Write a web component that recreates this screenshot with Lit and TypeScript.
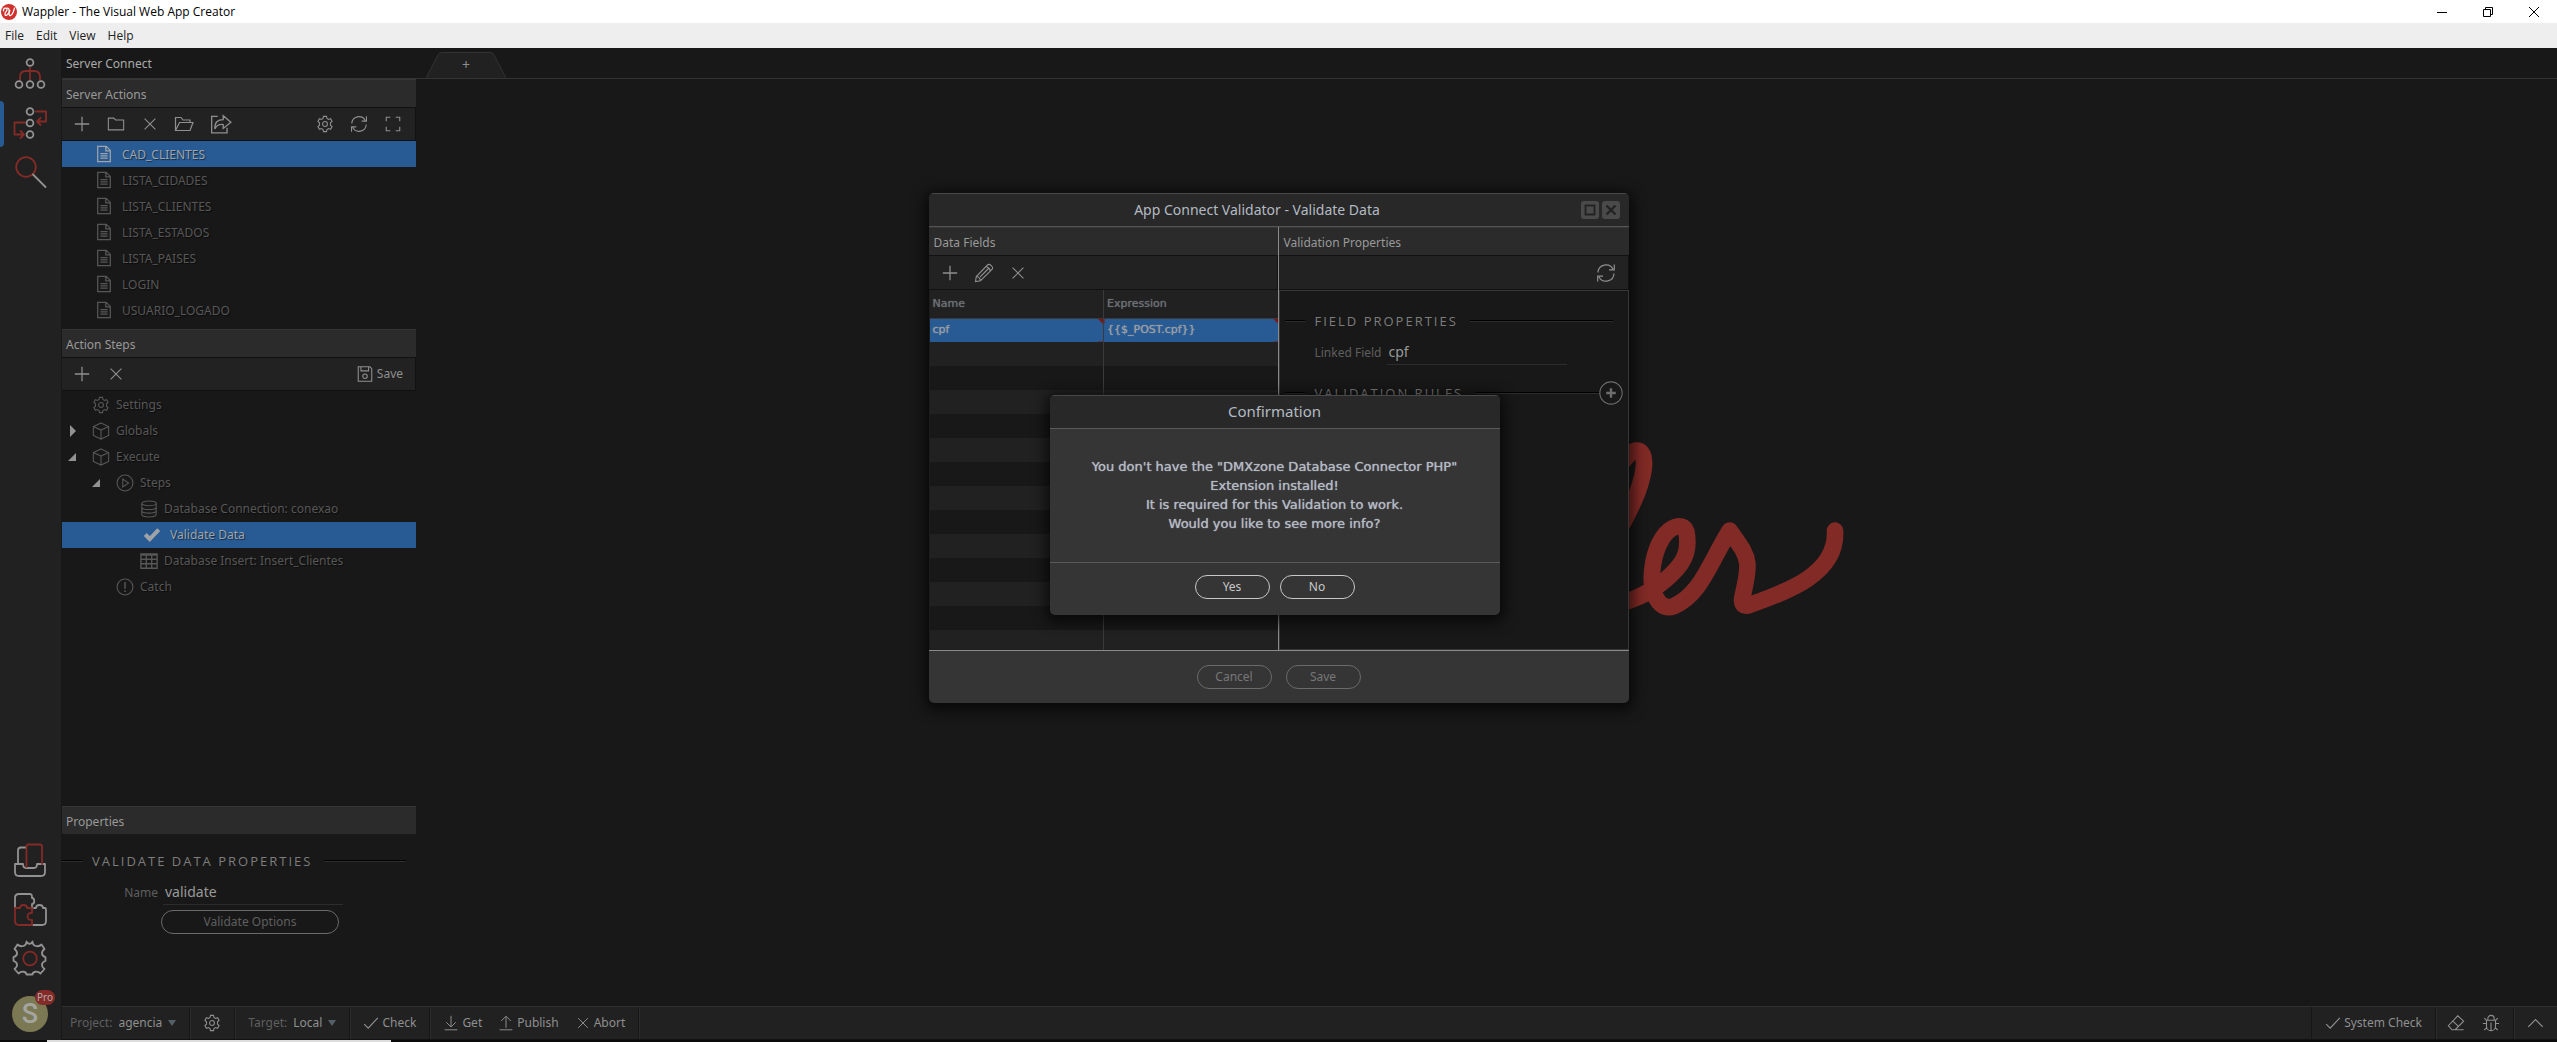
import { LitElement, html, svg, css, nothing } from "lit";
import { customElement, property } from "lit/decorators.js";
import { classMap } from "lit/directives/class-map.js";

const glyphs: Record<string, unknown> = {
  plus: svg`<path d="M10 2v16M2 10h16" stroke-width="1.4"/>`,
  folder: svg`<path d="M1.500 16.500v-13h6l2 2h9v11z"/>`,
  cross: svg`<path d="M4 4l12 12M16 4L4 16" stroke-width="1.2"/>`,
  open: svg`<path d="M1.500 16V3.500h5.500l2 2.500h7v2.500M1.500 16.500l4-8h13.500l-3 8z"/>`,
  share: svg`<path d="M7 3H1.500v15h14v-4.500M4.500 14.500C4 8.500 7 6 12 6V2.500L19 8.500 12 14V10.500C8 10 6 11 4.500 14.500z"/>`,
  gear: svg`<path d="M8.300 1.500h3.400l.500 2.400 1.700 1 2.300-.8 1.700 3-1.800 1.600v2.600l1.800 1.600-1.700 3-2.300-.8-1.700 1-.500 2.400H8.300l-.500-2.400-1.700-1-2.300.8-1.700-3 1.800-1.600V8.700L2.100 7.100l1.700-3 2.300.8 1.700-1z"/><circle cx="10" cy="10" r="2.700"/>`,
  refresh: svg`<path d="M2 9.500A8 8 0 0 1 17 6M18 10.500A8 8 0 0 1 3 14M18.300 1.500v5.300h-5.300M1.700 18.500v-5.300H7"/>`,
  full: svg`<path d="M2.500 7V2.500H7M13 2.500h4.500V7M17.500 13v4.500H13M7 17.500H2.500V13"/>`,
  file: svg`<path d="M3 1.500h9.500l4.500 4.500v12.500H3zM12 1.500V6.500h5M6 9.500h8M6 12h8M6 14.500h8" stroke-width="1.400"/>`,
  save: svg`<path d="M2.500 2h13l2 2v14h-15zM5.500 2v4.500h8.500V2"/><circle cx="10" cy="12.500" r="2.500"/>`,
  cube: svg`<path d="M10 1l8.500 4v10L10 19l-8.500-4V5zM1.500 5L10 9l8.500-4M10 9v10"/>`,
  play: svg`<circle cx="10" cy="10" r="8.800"/><path d="M7.500 5.500v9l6.500-4.500z"/>`,
  db: svg`<ellipse cx="10" cy="3.800" rx="8" ry="2.600"/><path d="M2 3.800v12.400c0 3.500 16 3.500 16 0V3.800M2 8c0 3.500 16 3.500 16 0M2 12c0 3.500 16 3.500 16 0"/>`,
  tick: svg`<path d="M2.500 9.500l5 5L17.500 4" stroke-width="4.500"/>`,
  table: svg`<path d="M1 2h18v16H1zM1 3.500h18M1 8h18M1 13h18M7 3v15M13 3v15" stroke-width="1.500"/>`,
  alert: svg`<circle cx="10" cy="10" r="8.800"/><path d="M10 4.500v7.500M10 13.500v2" stroke-width="1.600"/>`,
  check: svg`<path d="M1.500 11.500l5 5L18.500 3.500" stroke-width="1.500"/>`,
  down: svg`<path d="M10 1v13.500M4 9l6 6 6-6M2 18.500h16"/>`,
  up: svg`<path d="M10 16V2M4 7.500l6-6 6 6M2 18.500h16"/>`,
  eraser: svg`<path d="M9 17.500H5.500L1.500 13 12 2l6.500 6L9 17.500h9.500M6.500 8l6.500 6"/>`,
  bug: svg`<path d="M5 7h10v6.500a5 5 0 0 1-10 0zM6.500 7V5a3.500 3.500 0 0 1 7 0v2M10 9.500V18M1 10.500h4M15 10.500h4M2.500 4.500L5 7M17.500 4.500L15 7M2.500 18L5.500 15M17.500 18l-3-3"/>`,
  caret: svg`<path d="M1.500 14L10 5.500l8.500 8.500" stroke-width="1.400"/>`,
  pencil: svg`<path d="M1.500 18.500l.800-5L13.500 2c2-2 6.500 2 4.500 4.500L6.500 17.700zM2.300 13.500c2 0 4 2 4.200 4.200M12 3.500c2 .500 4 2.500 4.500 4.500M6 14L14.500 5.500" stroke-width="1.100"/>`,
  max: svg`<path d="M5 5h10v10H5z" stroke-width="2"/>`,
  shut: svg`<path d="M5 5l10 10M15 5L5 15" stroke-width="2.600"/>`,
  round: svg`<circle cx="10" cy="10" r="9.300" stroke-width=".900"/><path d="M10 6v8M6 10h8" stroke-width="2"/>`,
};

const icon = (name: string, size = 18) =>
  html`<svg class="icon" width=${size} height=${size} viewBox="0 0 20 20" aria-hidden="true">${glyphs[name]}</svg>`;

const rail = {
  routes: svg`<g class="r"><path d="M18 12v12M8 24v-3c0-4 2-6 6-6h8c4 0 6 2 6 6v3"/></g><g class="w"><circle cx="18" cy="6.500" r="3.400"/><circle cx="7" cy="28.500" r="3.400"/><circle cx="18" cy="28.500" r="3.400"/><circle cx="29" cy="28.500" r="3.400"/></g>`,
  api: svg`<g class="r"><path d="M24 6.500h10v10H25M28.500 13L25 16.500l3.500 3.500M13 17.500H2.500v12H12M8.500 26l3.500 3.500L8.500 33"/></g><g class="w"><circle cx="18" cy="6.500" r="3.400"/><circle cx="18" cy="18" r="3.400"/><circle cx="18" cy="29.500" r="3.400"/></g>`,
  search: svg`<g class="r"><circle cx="14" cy="13" r="9.800"/></g><g class="w"><path d="M21 20.500L33.500 33"/></g>`,
  tray: svg`<g class="w"><path d="M14 5.500H9c-2 0-3 1-3 3V22M3 22h8c0 3 1 4 3 4h8c2 0 3-1 3-4h8v8c0 3-1 4-4 4H7c-3 0-4-1-4-4z"/></g><g class="r"><path d="M14.500 25V4.500c0-1.500.500-2 2-2H28c1.500 0 2 .5 2 2V22"/></g>`,
  puzzle: svg`<g class="w"><path d="M3 17V7c0-3 1-4 4-4h10c3 0 3 1 3 4 3 0 3 6 0 6v5M22 17h2c0-4 7-4 7 0h2c1 0 1 1 1 2v11c0 3-1 4-4 4H21"/></g><g class="r"><path d="M20 34H7c-3 0-4-1-4-4V17h5c0-4 7-4 7 0h5v5c-6-1-6 8 0 7z"/></g>`,
  gear: svg`<g class="w"><path d="M14.500 1.500c0 5-6 6-9 3L2.500 9c4 3 3 7-1 8v4c4 1 5 5 1 8l4 4.500c3-3 8-2 8 1h6c0-3 5-4 8-1l4-4.500c-4-3-3-7 1-8v-4c-4-1-5-5-1-8l-3-4.500c-3 3-9 2-9-3-1 3-5 3-6 0z"/></g><g class="r"><circle cx="18" cy="18.500" r="6.800"/></g>`,
};

const text = css`
  :host {
    font-family: "Noto Sans", "Open Sans", "Liberation Sans", sans-serif;
    font-size: 12px;
    line-height: 16px;
    color: #8f8f8f;
  }
  * { box-sizing: border-box; }
  button, input, select { font: inherit; color: inherit; background: none; border: 0; margin: 0; padding: 0; border-radius: 0; outline: 0; }
  .icon { display: block; flex: none; fill: none; stroke: currentColor; stroke-width: 1.2; }
  .head { display: flex; flex: none; align-items: center; height: 28px; padding: 2px 4px 0; background: #2b2b2b; border-top: 1px solid #363636; color: #999; margin: 0; font-size: 12px; font-weight: 400; }
  .bar { display: flex; flex: none; align-items: center; height: 34px; padding: 0 5px 0 3px; background: #222; border: 1px solid #111; border-left: 0; color: #8f8f8f; }
  .bar button { display: flex; align-items: center; justify-content: center; gap: 3px; width: 34px; height: 30px; }
  .bar .save { width: auto; padding: 0 7px 0 9px; }
  .push { flex: 1; }
  .legend { display: flex; align-items: center; margin: 0; color: #7d7d7d; font: 400 13px/20px "Open Sans", "Noto Sans", sans-serif; letter-spacing: 2px; }
  .legend .rule { height: 2px; border-top: 1px solid #000; border-bottom: 1px solid #2d2d2d; }
  .legend .rule:first-child { width: 20px; margin-right: 10px; }
  .legend .rule:last-of-type { flex: 1; margin-left: 12px; }
  .field { display: flex; align-items: center; color: #5f5f5f; }
  .field label { text-align: right; padding-right: 5px; }
  .field input { width: 180px; height: 24px; padding: 0 2px 2px; border-bottom: 1px solid #2c2c2c; color: #9a9a9a; font-size: 14px; }
  .pill { height: 24px; border: 1px solid #6a6a6a; border-radius: 12px; }
`;

type Node = { depth: number; icon: string; label: string; fold?: "open" | "closed"; on?: boolean };

const actions = ["CAD_CLIENTES", "LISTA_CIDADES", "LISTA_CLIENTES", "LISTA_ESTADOS", "LISTA_PAISES", "LOGIN", "USUARIO_LOGADO"];
const steps: Node[] = [
  { depth: 0, icon: "gear", label: "Settings" },
  { depth: 0, icon: "cube", label: "Globals", fold: "closed" },
  { depth: 0, icon: "cube", label: "Execute", fold: "open" },
  { depth: 1, icon: "play", label: "Steps", fold: "open" },
  { depth: 2, icon: "db", label: "Database Connection: conexao" },
  { depth: 2, icon: "tick", label: "Validate Data", on: true },
  { depth: 2, icon: "table", label: "Database Insert: Insert_Clientes" },
  { depth: 1, icon: "alert", label: "Catch" },
];

@customElement("side-rail")
export class SideRail extends LitElement {
  static styles = [text, css`
    :host { display: flex; flex-direction: column; align-items: stretch; background: #212121; padding-top: 1px; }
    button { position: relative; display: flex; justify-content: center; align-items: center; height: 49px; padding-right: 1px; }
    .active::before { content: ""; position: absolute; left: 0; top: 3px; bottom: 0; width: 4px; background: #285b94; border-radius: 0 4px 4px 0; }
    .pic { fill: none; stroke-width: 1.8; stroke-linecap: round; stroke-linejoin: round; }
    .r { stroke: #842a27; }
    .w { stroke: #929292; }
    .account { height: 58px; padding-top: 5px; }
    .face { width: 36px; height: 36px; border-radius: 50%; background: #7b7854; color: #a5a5a0; font: 500 27px/37px Roboto, sans-serif; text-align: center; }
    .pro { position: absolute; right: 6px; top: 8px; padding: 0 2px; border-radius: 8px; background: #842a27; color: #b5aaaa; font-size: 10px; line-height: 15px; }
  `];
  private item(key: keyof typeof rail, label: string, on = false) {
    return html`<button class=${classMap({ active: on })} aria-label=${label}><svg class="pic" width="36" height="36" viewBox="0 0 36 36">${rail[key]}</svg></button>`;
  }
  render() {
    return html`
      ${this.item("routes", "Routes")}${this.item("api", "Server Connect", true)}${this.item("search", "Search")}
      <div class="push"></div>
      ${this.item("tray", "Resources")}${this.item("puzzle", "Extensions")}${this.item("gear", "Options")}
      <button class="account" aria-label="Account"><span class="face">S</span><span class="pro">Pro</span></button>`;
  }
}

@customElement("tool-panels")
export class ToolPanels extends LitElement {
  static styles = [text, css`
    :host { display: flex; flex-direction: column; min-height: 0; }
    ul { list-style: none; margin: 0; padding: 0; color: #575757; text-shadow: 1px 1px 1px #0008; }
    li { display: flex; align-items: center; height: 26px; }
    .files { padding-bottom: 6px; }
    .files li { padding-left: 33px; gap: 9px; }
    .files span { padding-top: 1px; }
    .tree { padding-top: 1px; }
    .on { background: #285b94; color: #9fa3a8; }
    .grow { flex: 1; }
    .fold, .slot { width: 24px; flex: none; }
    .slot.wide { width: 30px; padding-left: 3px; }
    .fold svg { display: block; fill: #929292; }
    .d0 { padding-left: 6px; }
    .d1 { padding-left: 30px; }
    .d2 { padding-left: 54px; }
    .props { min-height: 200px; }
    .props .legend { padding: 17px 10px 0 0; }
    .props .field { margin: 10px 0 5px; }
    .props label { width: 101px; }
    .wide-pill { width: 178px; margin-left: 99px; color: #5f5f5f; }
  `];
  private arrow(kind?: string) {
    if (!kind) return nothing;
    return html`<svg width="12" height="12" viewBox="0 0 12 12">${kind === "open" ? svg`<path d="M0 10L8 2v8z"/>` : svg`<path d="M2 0l6 6-6 6z"/>`}</svg>`;
  }
  render() {
    return html`
      <section>
        <h2 class="head">Server Actions</h2>
        <div class="bar">
          <button aria-label="New">${icon("plus")}</button><button aria-label="New folder">${icon("folder")}</button>
          <button aria-label="Delete">${icon("cross")}</button><button aria-label="Open">${icon("open", 20)}</button>
          <button class="save" aria-label="Share">${icon("share", 22)}</button><span class="push"></span>
          <button aria-label="Settings">${icon("gear")}</button><button aria-label="Refresh">${icon("refresh")}</button>
          <button aria-label="Full screen">${icon("full")}</button>
        </div>
        <ul class="files">${actions.map((a, i) => html`<li class=${classMap({ on: i === 0 })}>${icon("file")}<span>${a}</span></li>`)}</ul>
      </section>
      <section class="grow">
        <h2 class="head">Action Steps</h2>
        <div class="bar">
          <button aria-label="Add step">${icon("plus")}</button><button aria-label="Remove step">${icon("cross")}</button>
          <span class="push"></span><button class="save">${icon("save")}Save</button>
        </div>
        <ul class="tree">${steps.map((n) => html`<li class=${classMap({ on: !!n.on, ["d" + n.depth]: true })}>
          <span class="fold">${this.arrow(n.fold)}</span><span class=${classMap({ slot: true, wide: !!n.on })}>${icon(n.icon)}</span><span>${n.label}</span></li>`)}</ul>
      </section>
      <section class="props">
        <h2 class="head">Properties</h2>
        <h3 class="legend"><span class="rule"></span>VALIDATE DATA PROPERTIES<span class="rule"></span></h3>
        <div class="field"><label for="step-name">Name</label><input id="step-name" value="validate" /></div>
        <button class="pill wide-pill">Validate Options</button>
      </section>`;
  }
}

@customElement("status-bar")
export class StatusBar extends LitElement {
  static styles = [text, css`
    :host { display: flex; height: 34px; background: #212121; border-top: 1px solid #2f2f2f; border-bottom: 1px solid #111; }
    .cell { display: flex; align-items: center; border-right: 1px solid #161616; box-shadow: 1px 0 #2c2c2c; }
    .cell button { display: flex; align-items: center; gap: 3px; height: 100%; }
    .pick { padding: 0 13px; gap: 6px; color: #5f5f5f; }
    .pick:first-child { padding-left: 8px; }
    .pick select { appearance: none; color: #8f8f8f; field-sizing: content; }
    .pick svg { fill: #55606a; }
    .solo { padding: 0 13px; }
    .trio { gap: 16px; padding: 0 13px; }
    .end { border-left: 1px solid #161616; }
    .icons { gap: 17px; padding: 0 13px 0 11px; }
    .last { border-right: 0; padding: 0 13px; }
  `];
  private pick(id: string, label: string, value: string) {
    return html`<div class="cell pick"><label for=${id}>${label}</label><select id=${id}><option>${value}</option></select><svg width="8" height="6" viewBox="0 0 8 6"><path d="M0 0h8L4 6z"/></svg></div>`;
  }
  render() {
    return html`
      ${this.pick("project", "Project:", "agencia")}
      <div class="cell solo"><button aria-label="Project settings">${icon("gear")}</button></div>
      ${this.pick("target", "Target:", "Local")}
      <div class="cell solo"><button>${icon("check", 16)}Check</button></div>
      <div class="cell trio"><button>${icon("down", 16)}Get</button><button>${icon("up", 16)}Publish</button><button>${icon("cross", 16)}Abort</button></div>
      <span class="push"></span>
      <div class="cell end solo"><button>${icon("check", 16)}System Check</button></div>
      <div class="cell icons"><button aria-label="Clear">${icon("eraser")}</button><button aria-label="Debug">${icon("bug")}</button></div>
      <div class="cell last"><button aria-label="Expand">${icon("caret", 17)}</button></div>`;
  }
}

@customElement("validator-dialog")
export class ValidatorDialog extends LitElement {
  static styles = [text, css`
    :host { display: flex; flex-direction: column; border-radius: 5px; overflow: hidden; background: #353535; box-shadow: 0 3px 14px 4px #000a; }
    .title { display: flex; align-items: center; height: 34px; padding: 0 9px 0 5px; background: #282828; border-top: 1px solid #484848; border-bottom: 1px solid #555; color: #b4bac3; }
    h1 { flex: 1; text-align: center; margin: 0; font-size: 14px; font-weight: 400; line-height: 20px; }
    .win { display: flex; gap: 3px; }
    .win button { background: #4a4a4a; color: #222; border-radius: 3px; }
    .panes { display: grid; grid-template-columns: 350px 1fr; height: 423px; }
    .pane { display: flex; flex-direction: column; min-height: 0; overflow: hidden; }
    .pane .head { padding: 3px 5px 0; }
    .pane .bar { height: 35px; padding-left: 4px; }
    .left { border-right: 1px solid #8a8a8a; background: #1c1c1c; }
    .grid { padding-left: 1px; }
    table { width: 100%; border-collapse: collapse; table-layout: fixed; font: 400 11px/14px "DejaVu Sans", Verdana, sans-serif; text-shadow: 0 0 1px currentColor; }
    th, td { padding: 0 3px; text-align: left; height: 24px; font-weight: 400; }
    th + th, td + td { border-left: 1px solid #3a3a3a; }
    th { height: 28px; background: #212121; border-bottom: 1px solid #3a3a3a; color: #6c7075; }
    tbody tr:nth-child(even) { background: #212121; }
    tbody tr:nth-child(odd) { background: #181818; }
    tbody tr.on { background: #285b94; color: #9a9ea4; }
    tr.on td { background-image: linear-gradient(225deg, #7c1414 4px, transparent 4px); }
    .detail { flex: 1; background: #181818; border: 1px solid #363636; padding: 20px 5px 0; }
    .detail .field { margin: 10px 0 16px; }
    .detail label { width: 102px; }
    .detail .legend:first-child { padding-right: 10px; }
    .legend button { display: flex; color: #6c6c6c; }
    .foot { display: flex; justify-content: center; align-items: center; gap: 14px; height: 53px; border-top: 1px solid #8a8a8a; }
    .foot .pill { width: 75px; color: #777; }
  `];
  render() {
    const blanks = Array.from({ length: 13 });
    return html`
      <header class="title"><h1>App Connect Validator - Validate Data</h1>
        <div class="win"><button aria-label="Maximize">${icon("max")}</button><button aria-label="Close">${icon("shut")}</button></div></header>
      <div class="panes">
        <section class="pane left">
          <h2 class="head">Data Fields</h2>
          <div class="bar"><button aria-label="Add field">${icon("plus")}</button><button aria-label="Edit field">${icon("pencil", 20)}</button><button aria-label="Remove field">${icon("cross")}</button></div>
          <div class="grid"><table><thead><tr><th scope="col">Name</th><th scope="col">Expression</th></tr></thead>
            <tbody><tr class="on"><td>cpf</td><td>{{$_POST.cpf}}</td></tr>${blanks.map(() => html`<tr><td></td><td></td></tr>`)}</tbody></table></div>
        </section>
        <section class="pane">
          <h2 class="head">Validation Properties</h2>
          <div class="bar"><span class="push"></span><button aria-label="Refresh">${icon("refresh", 20)}</button></div>
          <div class="detail">
            <h3 class="legend"><span class="rule"></span>FIELD PROPERTIES<span class="rule"></span></h3>
            <div class="field"><label for="linked">Linked Field</label><input id="linked" value="cpf" /></div>
            <h3 class="legend"><span class="rule"></span>VALIDATION RULES<span class="rule"></span><button aria-label="Add rule">${icon("round", 24)}</button></h3>
          </div>
        </section>
      </div>
      <footer class="foot"><button class="pill">Cancel</button><button class="pill">Save</button></footer>`;
  }
}

@customElement("confirm-box")
export class ConfirmBox extends LitElement {
  @property() heading = "Confirmation";
  static styles = [text, css`
    :host { display: block; border-radius: 5px; overflow: hidden; background: #353535; color: #b4bac3; box-shadow: 0 3px 14px 4px #000a; }
    h2 { display: flex; align-items: center; justify-content: center; height: 34px; margin: 0; padding-bottom: 2px; background: #282828; border-top: 1px solid #484848; border-bottom: 1px solid #5a5a5a; font-size: 15px; font-weight: 400; }
    p { margin: 0; padding: 28px 30px 29px; text-align: center; font: 400 13px/19px "DejaVu Sans", Verdana, sans-serif; text-shadow: 0 0 1px currentColor; }
    div { display: flex; justify-content: center; gap: 10px; padding: 12px 0 16px; border-top: 1px solid #5a5a5a; }
    .pill { width: 75px; border-color: #c8c8c8; color: #c8c8c8; }
  `];
  render() {
    return html`<h2>${this.heading}</h2>
      <p>You don't have the "DMXzone Database Connector PHP"<br />Extension installed!<br />It is required for this Validation to work.<br />Would you like to see more info?</p>
      <div><button class="pill">Yes</button><button class="pill">No</button></div>`;
  }
}

@customElement("app-root")
export class AppRoot extends LitElement {
  static styles = [text, css`
    :host { display: flex; flex-direction: column; height: 100vh; background: #181818; }
    .caption, .menu { font-family: "Open Sans", "Noto Sans", sans-serif; }
    .caption { display: flex; align-items: center; height: 23px; padding-left: 1px; background: #fff; color: #000; }
    .caption > svg { margin-right: 5px; }
    .caption button { display: flex; align-items: center; justify-content: center; width: 46px; height: 23px; color: #000; }
    .sys { fill: none; stroke: #000; }
    .menu { display: flex; gap: 12px; height: 25px; padding-left: 5px; align-items: center; background: #eee; }
    .menu a { color: #222; text-decoration: none; }
    .shell { flex: 1; min-height: 0; position: relative; display: grid; grid-template-columns: 61px 1fr; }
    .main { display: grid; grid-template: 31px 1fr auto / 354px 1fr; padding-left: 1px; min-height: 0; }
    .top { grid-column: 1 / -1; display: grid; grid-template-columns: 354px 1fr; border-bottom: 1px solid #333; }
    .top h1 { margin: 0; padding: 7px 4px 5px; font-size: 12px; font-weight: 400; line-height: 18px; color: #aaa; }
    .tab { align-self: end; justify-self: start; margin-left: 10px; display: grid; place-items: center; color: #8f8f8f; font-size: 14px; }
    .tab > * { grid-area: 1 / 1; }
    .tab svg { fill: #212121; stroke: #333; display: block; }
    .stage { display: flex; align-items: center; justify-content: center; }
    .mark { fill: none; stroke: #812a26; stroke-width: 50; stroke-linecap: round; stroke-linejoin: round; }
    status-bar { grid-column: 1 / -1; }
    validator-dialog { position: absolute; top: 145px; left: calc(50% - 350px); width: 700px; }
    confirm-box { position: absolute; top: 347px; left: calc(50% - 229px); width: 450px; }
    .edge { display: flex; height: 2px; background: #0a0a0a; padding-left: 47px; }
    .edge span { width: 344px; background: #ddd; }
  `];
  render() {
    return html`
      <header class="caption">
        <svg width="16" height="16" viewBox="0 0 16 16"><circle cx="8" cy="8" r="8" fill="#d0312d"/><path d="M2.500 7C2 4 6 3 6 5.500S3.500 8 4 10.500c.500 2 3 1 5-4.500-1.500 4-1 6 .500 5.500S12.500 8 13.500 4M5.500 4.500C7 3.500 8.500 4.500 8 7" fill="none" stroke="#fff" stroke-width="1.200" stroke-linecap="round"/></svg>
        <span>Wappler - The Visual Web App Creator</span><span class="push"></span>
        <button aria-label="Minimize"><svg class="sys" width="10" height="10"><path d="M0 5.500h10"/></svg></button>
        <button aria-label="Restore"><svg class="sys" width="10" height="10"><path d="M.500 2.500h7v7h-7zM2.500 2.500v-2h7v7h-2"/></svg></button>
        <button aria-label="Close"><svg class="sys" width="10" height="10"><path d="M0 0l10 10M10 0L0 10"/></svg></button>
      </header>
      <nav class="menu"><a href="#file">File</a><a href="#edit">Edit</a><a href="#view">View</a><a href="#help">Help</a></nav>
      <div class="shell">
        <side-rail></side-rail>
        <div class="main">
          <div class="top"><h1>Server Connect</h1>
            <button class="tab" aria-label="New tab"><svg width="80" height="26" viewBox="0 0 80 26"><path d="M0 26L12 3q1-2.500 4-2.500h48q3 0 4 2.500l12 23"/></svg><span>+</span></button></div>
          <tool-panels></tool-panels>
          <div class="stage">
            <svg width="714" height="231" viewBox="-1413 81 2142 693" role="img" aria-label="Wappler">
              <path class="mark" d="M-90 610C-60 480 40 150 108 152C140 155 132 215 110 275C80 355 20 440 0 520C-20 640 20 625 90 600C160 575 215 525 240 490C262 458 262 425 256 395C245 365 205 380 184 415C158 455 148 520 154 560C165 610 190 630 220 618C300 580 320 500 386 392C420 440 436 460 439 490C442 530 426 575 423 600C424 618 432 620 448 614C560 575 710 520 702 392"/>
            </svg>
          </div>
          <status-bar></status-bar>
        </div>
        <validator-dialog></validator-dialog>
        <confirm-box></confirm-box>
      </div>
      <div class="edge"><span></span></div>`;
  }
}
